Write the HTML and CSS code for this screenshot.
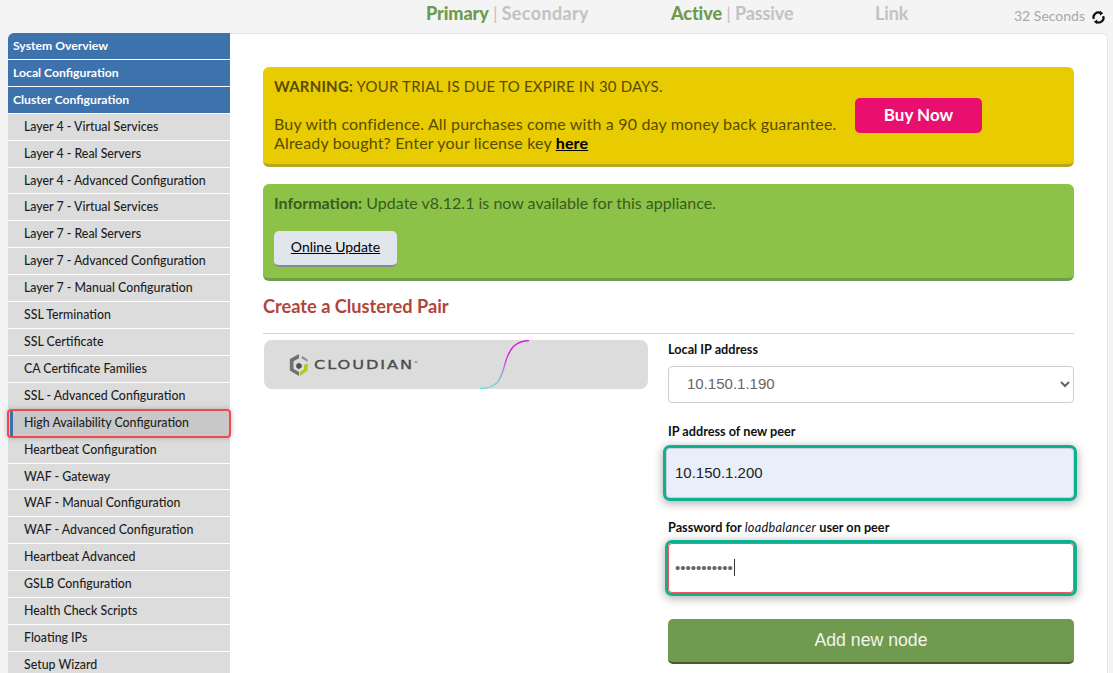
FILE: index.html
```html
<!DOCTYPE html>
<html lang="en">
<head>
<meta charset="utf-8">
<title>Create a Clustered Pair</title>
<link rel="stylesheet" href="styles.css">
</head>
<body>
<header class="topbar">
  <div class="status status-role"><b class="on">Primary</b> <span class="sep">|</span> <span class="wide">Secondary</span></div>
  <div class="status status-state"><b class="on">Active</b> <span class="sep">|</span> <span>Passive</span></div>
  <div class="status status-link"><span>Link</span></div>
  <div class="timer">32 Seconds
    <svg class="refresh" viewBox="0 0 16 16" width="15" height="15" aria-hidden="true">
      <path d="M3 9.5A5 5 0 0 1 10.5 3.6" fill="none" stroke="#111" stroke-width="2.4"/>
      <path d="M13 6.5A5 5 0 0 1 5.5 12.4" fill="none" stroke="#111" stroke-width="2.4"/>
      <path d="M9.5 0.8L13 3.4L9.5 6Z" fill="#111"/>
      <path d="M6.5 15.2L3 12.6L6.5 10Z" fill="#111"/>
    </svg>
  </div>
</header>
<div class="shell">
  <nav class="sidebar">
    <a class="nav-head first">System Overview</a>
    <a class="nav-head">Local Configuration</a>
    <a class="nav-head">Cluster Configuration</a>
    <a class="nav-item">Layer 4 - Virtual Services</a>
    <a class="nav-item">Layer 4 - Real Servers</a>
    <a class="nav-item">Layer 4 - Advanced Configuration</a>
    <a class="nav-item">Layer 7 - Virtual Services</a>
    <a class="nav-item">Layer 7 - Real Servers</a>
    <a class="nav-item">Layer 7 - Advanced Configuration</a>
    <a class="nav-item">Layer 7 - Manual Configuration</a>
    <a class="nav-item">SSL Termination</a>
    <a class="nav-item">SSL Certificate</a>
    <a class="nav-item">CA Certificate Families</a>
    <a class="nav-item">SSL - Advanced Configuration</a>
    <a class="nav-item current">High Availability Configuration</a>
    <a class="nav-item">Heartbeat Configuration</a>
    <a class="nav-item">WAF - Gateway</a>
    <a class="nav-item">WAF - Manual Configuration</a>
    <a class="nav-item">WAF - Advanced Configuration</a>
    <a class="nav-item">Heartbeat Advanced</a>
    <a class="nav-item">GSLB Configuration</a>
    <a class="nav-item">Health Check Scripts</a>
    <a class="nav-item">Floating IPs</a>
    <a class="nav-item">Setup Wizard</a>
  </nav>
  <main class="panel">
    <section class="notice warn">
      <div class="warn-text">
        <p class="caps"><b>WARNING:</b> YOUR TRIAL IS DUE TO EXPIRE IN 30 DAYS.</p>
        <p class="gap">Buy with confidence. All purchases come with a 90 day money back guarantee.<br>Already bought? Enter your license key <a class="here">here</a></p>
      </div>
      <a class="buy">Buy Now</a>
    </section>
    <section class="notice info">
      <p><b>Information:</b> Update v8.12.1 is now available for this appliance.</p>
      <a class="update">Online Update</a>
    </section>
    <h1 class="title">Create a Clustered Pair</h1>
    <div class="columns">
      <div class="brand">
        <svg class="brand-mark" viewBox="0 0 24 26" width="22" height="24" aria-hidden="true">
          <path d="M12 1L2 6.5V19L12 25L12 20.500L6 17V9L12 5.500Z" fill="#6f7173"/>
          <path d="M15 3L21.500 7V9.500L15 5.800Z" fill="#8d8f91"/>
          <path d="M21.500 11V19L13 25V20.500L17.500 17.500V13Z" fill="#b5c81e"/>
          <path d="M11.500 10.500L15 12.500V15.500L11.500 17.500L9 15.500V12.500Z" fill="#4d4f51"/>
        </svg>
        <span class="brand-name">CLOUDIAN<sup>®</sup></span>
        <svg class="brand-curve" viewBox="0 0 52 49" width="52" height="49" aria-hidden="true">
          <defs><linearGradient id="wave" x1="0" y1="1" x2="0" y2="0">
            <stop offset="0" stop-color="#5fe3d3"/><stop offset="0.35" stop-color="#a08fd0"/><stop offset="0.65" stop-color="#e020e0"/><stop offset="1" stop-color="#d014d8"/>
          </linearGradient></defs>
          <path d="M1 48.500C20 48 22 38 26 24C30 9 36 1 50 0.500" fill="none" stroke="url(#wave)" stroke-width="1.300"/>
        </svg>
      </div>
      <form class="form">
        <label class="field-label first-label">Local IP address</label>
        <div class="select-box">
          <select class="select"><option>10.150.1.190</option></select>
        </div>
        <label class="field-label peer-label">IP address of new peer</label>
        <input class="input filled" type="text" value="10.150.1.200">
        <label class="field-label pw-label">Password for <i class="user">loadbalancer</i> user on peer</label>
        <div class="input password"><span class="dots">•••••••••••</span><span class="caret"></span></div>
        <button class="submit" type="button">Add new node</button>
      </form>
    </div>
  </main>
</div>
</body>
</html>
```
FILE: styles.css
```css
* { box-sizing: border-box; }
html, body { margin: 0; height: 673px; overflow: hidden; }
body {
  background: #f4f4f4;
  font-family: Lato, "Noto Sans", sans-serif;
  color: #222;
}
p { margin: 0; }

.topbar {
  height: 33px;
  display: flex;
  align-items: flex-start;
  font-size: 18px;
  font-weight: 700;
  color: #c2c2c2;
  padding-top: 2px;
  line-height: 22px;
}
.status { white-space: nowrap; letter-spacing: -0.1px; }
.status .on { color: #6f9a4e; }
.status .sep { font-weight: 400; }
.status .wide { letter-spacing: 0.35px; }
.status-role { margin-left: 426px; width: 245px; }
.status-state { width: 204px; }
.status-link { width: 139px; }
.timer {
  font-size: 14px;
  font-weight: 400;
  color: #a9a9a9;
  margin-top: 3px;
  display: flex;
  align-items: center;
  gap: 6px;
}
.refresh { margin-top: 2px; }

.shell { display: flex; padding-left: 8px; align-items: flex-start; }
.sidebar { width: 222px; flex: none; font-size: 12.35px; }
.nav-head, .nav-item {
  display: block;
  height: 26.91px;
  line-height: 26px;
  border-bottom: 1px solid #fff;
  white-space: nowrap;
}
.nav-head {
  background: #3e72ad;
  color: #fff;
  font-weight: 700;
  font-size: 12.2px;
  padding-left: 5px;
}
.nav-head.first { border-top-left-radius: 6px; }
.nav-item {
  background: #dcdcdc;
  color: #1e1e1e;
  padding-left: 16px;
  font-weight: 500;
}
.nav-item.current {
  background: linear-gradient(90deg, #c8c8c8 2px, #3e72ad 2px, #3e72ad 5px, #c8c8c8 5px);
  border-bottom: 0;
  border-radius: 3px;
  outline: 2px solid #f1484f;
  outline-offset: -1px;
  position: relative;
  box-shadow: 0 0 4px 2px rgba(120, 120, 120, 0.35);
}

.panel {
  width: 878px;
  height: 640px;
  background: #fff;
  border: 1px solid #e4e4e4;
  border-left: 0;
  border-bottom: 0;
  border-top-right-radius: 6px;
  padding: 33px 33px 0 33px;
  overflow: hidden;
}
.notice {
  border-radius: 6px;
  font-size: 16px;
  line-height: 19px;
  padding: 10px 11px 0;
}
.notice b { font-weight: 700; }
.warn {
  height: 100px;
  background: #e8cb00;
  border-bottom: 3px solid #b5a61e;
  color: #584c00;
  display: flex;
  align-items: flex-start;
  letter-spacing: 0.17px;
}
.warn-text { width: 581px; flex: none; white-space: nowrap; }
.caps { font-size: 15px; letter-spacing: 0.2px; }
.gap { margin-top: 18px; }
.here { color: #000; font-weight: 700; text-decoration: underline; }
.buy {
  margin-top: 21px;
  width: 127px;
  height: 35px;
  background: #e90f6f;
  color: #fff;
  border-radius: 5px;
  font-size: 17px;
  font-weight: 700;
  line-height: 34px;
  text-align: center;
  letter-spacing: 0;
}
.info {
  height: 97px;
  margin-top: 17px;
  padding-top: 9px;
  background: #8bc247;
  border-bottom: 3px solid #6f9c4e;
  color: #3b5a22;
}
.update {
  display: block;
  margin-top: 19px;
  width: 123px;
  height: 36px;
  background: #e1e5ec;
  border-bottom: 2px solid #8a8a92;
  border-radius: 5px;
  color: #000;
  font-size: 14px;
  line-height: 32px;
  text-align: center;
  text-decoration: underline;
}
.title {
  margin: 15px 0 0;
  height: 37px;
  border-bottom: 1px solid #d2d2d2;
  box-sizing: content-box;
  font-size: 18.2px;
  font-weight: 700;
  line-height: 20px;
  color: #b0453c;
}
.columns { display: flex; align-items: flex-start; padding-top: 6px; }
.brand {
  position: relative;
  width: 384px;
  height: 49px;
  margin-left: 1px;
  flex: none;
  background: #dcdcdc;
  border-radius: 8px;
  display: flex;
  align-items: center;
  padding-left: 24px;
  gap: 4px;
  overflow: hidden;
}
.brand-mark { flex: none; }
.brand-name {
  font-family: "DejaVu Sans", sans-serif;
  font-size: 12px;
  letter-spacing: 1.4px;
  color: #4a4c4e;
  line-height: 1;
  -webkit-text-stroke: 0.3px #4a4c4e;
  transform: scaleX(1.35);
  transform-origin: left center;
}
.brand-name sup {
  font-size: 3px;
  letter-spacing: 0;
  vertical-align: 6px;
  line-height: 0;
  -webkit-text-stroke: 0;
}
.brand-curve { position: absolute; left: 215px; top: 0; }

.form { width: 406px; margin-left: 20px; flex: none; display: flex; flex-direction: column; }
.field-label {
  font-size: 12.7px;
  font-weight: 700;
  line-height: 16px;
  color: #111;
  margin-top: 19px;
  margin-bottom: 9px;
  white-space: nowrap;
}
.first-label { margin-top: 1px; margin-bottom: 9px; }
.peer-label { margin-top: 20px; }
.user { font-weight: 400; letter-spacing: 0.3px; }
.select-box { height: 37px; }
.select {
  width: 100%;
  height: 37px;
  background: #fff;
  border: 1px solid #cfcfcf;
  border-radius: 4px;
  color: #666;
  font-family: "Liberation Sans", Arial, sans-serif;
  font-size: 15px;
  padding: 0 0 2px 14px;
}
.input {
  width: 100%;
  border: 1px solid #e4a0a0;
  border-radius: 4px;
  font-family: "Liberation Sans", Arial, sans-serif;
  font-size: 15px;
  outline: 3px solid #0fb08f;
  outline-offset: 0;
  box-shadow: 0 2px 8px 4px rgba(90, 90, 90, 0.45);
}
.filled {
  height: 50px;
  background: #e8effb;
  border-color: #c8d2e0;
  color: #222;
  padding: 0 8px 2px;
  margin-left: -2px;
  width: 408px;
  flex: none;
}
.password {
  height: 50px;
  flex: none;
  background: #fff;
  border-color: #ea5a60;
  display: flex;
  align-items: center;
  padding: 0 0 2px 6px;
  color: #666;
  width: 406px;
}
.pw-label { margin-top: 21px; margin-bottom: 8px; }
.dots { font-size: 15px; }
.caret { width: 1px; height: 17px; background: #333; margin-left: 1px; }
.submit {
  margin-top: 26px;
  height: 45px;
  flex: none;
  border: 0;
  border-bottom: 2px solid #47582f;
  border-radius: 5px;
  background: #6f9a4f;
  color: #f2f6ec;
  font-family: "Liberation Sans", Arial, sans-serif;
  font-size: 17.7px;
  padding: 0 0 1px;
}
```
